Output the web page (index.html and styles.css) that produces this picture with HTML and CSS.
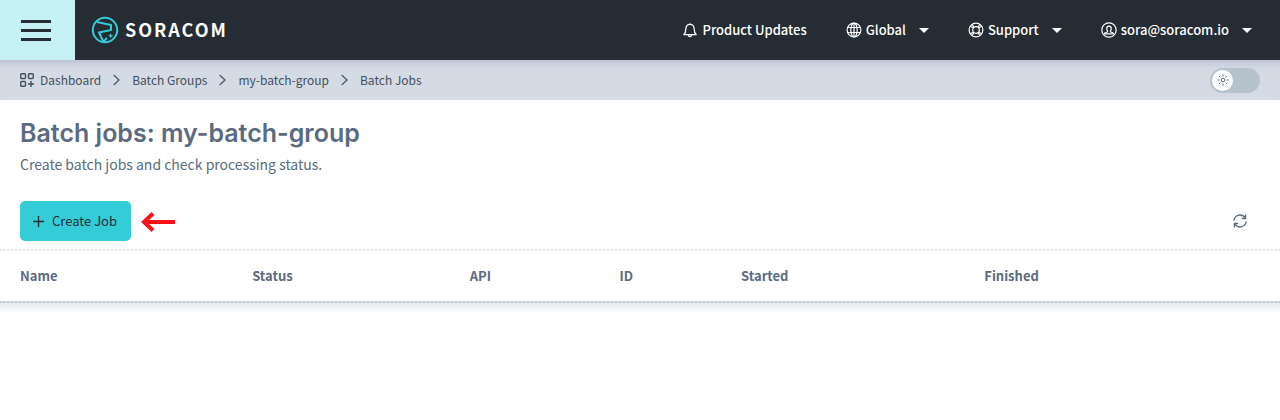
FILE: index.html
```html
<!DOCTYPE html>
<html lang="en">
<head>
    <meta charset="UTF-8">
    <meta name="viewport" content="width=device-width, initial-scale=1.0">
    <title>Batch jobs: my-batch-group</title>
    <link rel="stylesheet" href="styles.css">
</head>
<body>
    <header class="topbar">
        <button type="button" class="menu-button" aria-label="Open menu">
            <span class="menu-line"></span>
            <span class="menu-line"></span>
            <span class="menu-line"></span>
        </button>
        <a href="#" class="logo">
            <svg class="logo-mark" viewBox="0 0 28 28" fill="none" stroke="#34cdd7" stroke-width="2">
                <circle cx="14" cy="14" r="12.2"/>
                <path d="M6 6l14 3v5L8 16.5l4.5 9.5" stroke-linejoin="round"/>
                <path d="M12.5 25.5l3.5-3.5" stroke-width="1.8"/>
                <path d="M19.7 17l.8 2 2 .8-2 .8-.8 2-.8-2-2-.8 2-.8z" fill="#34cdd7" stroke="none"/>
            </svg>
            <span class="logo-text">SORACOM</span>
        </a>
        <nav class="topnav">
            <button type="button" class="nav-item">
                <svg class="icon" viewBox="0 0 16 16" fill="none" stroke="currentColor" stroke-width="1.3">
                    <path d="M8 1.2v1M1.8 12.6h12.4c-1.6-1.5-2-2.6-2-5.6 0-2.9-1.6-4.7-4.2-4.7S3.8 4.1 3.8 7c0 3-.4 4.1-2 5.6z" stroke-linejoin="round"/>
                    <path d="M6.3 13.2c.2 1 .8 1.5 1.7 1.5s1.5-.5 1.7-1.5"/>
                </svg>
                <span>Product Updates</span>
            </button>
            <button type="button" class="nav-item">
                <svg class="icon" viewBox="0 0 16 16" fill="none" stroke="currentColor" stroke-width="1.2">
                    <circle cx="8" cy="8" r="6.9"/>
                    <ellipse cx="8" cy="8" rx="3.2" ry="6.9"/>
                    <path d="M1.5 5.5h13M1.5 10.5h13M8 1v14"/>
                </svg>
                <span>Global</span>
                <span class="caret"></span>
            </button>
            <button type="button" class="nav-item">
                <svg class="icon" viewBox="0 0 16 16" fill="none" stroke="currentColor" stroke-width="1.2">
                    <circle cx="8" cy="8" r="6.9"/>
                    <circle cx="8" cy="8" r="3.3"/>
                    <path d="M2.5 4.2l3 1.9M4.2 2.5l1.9 3M13.5 4.2l-3 1.9M11.8 2.5l-1.9 3M2.5 11.8l3-1.9M4.2 13.5l1.9-3M13.5 11.8l-3-1.9M11.8 13.5l-1.9-3"/>
                </svg>
                <span>Support</span>
                <span class="caret"></span>
            </button>
            <button type="button" class="nav-item">
                <svg class="icon" viewBox="0 0 16 16" fill="none" stroke="currentColor" stroke-width="1.2">
                    <circle cx="8" cy="8" r="7.2"/>
                    <path d="M3.2 11.8c.5-1.2 1.5-1.5 3.3-1.8V9C5.9 8.3 5.8 7.5 5.8 6.4 5.8 4.9 6.7 4.2 8 4.2s2.2.7 2.2 2.2c0 1.1-.1 1.9-.7 2.6v1c1.8.3 2.8.6 3.3 1.8z"/>
                </svg>
                <span>sora@soracom.io</span>
                <span class="caret"></span>
            </button>
        </nav>
    </header>

    <div class="breadcrumb-bar">
        <nav class="breadcrumbs" aria-label="Breadcrumb">
            <a href="#" class="crumb">
                <svg class="crumb-icon" viewBox="0 0 14 14" fill="none" stroke="currentColor" stroke-width="1.4">
                    <rect x=".7" y=".7" width="4.8" height="4.8" rx="1"/>
                    <rect x="8.5" y=".7" width="4.8" height="4.8" rx="1"/>
                    <rect x=".7" y="8.5" width="4.8" height="4.8" rx="1"/>
                    <path d="M11 8v6M8 11h6"/>
                </svg>
                <span>Dashboard</span>
            </a>
            <svg class="chevron" viewBox="0 0 7 12" fill="none" stroke="currentColor" stroke-width="1.3"><path d="M.7 1l5.3 5-5.3 5"/></svg>
            <a href="#" class="crumb">Batch Groups</a>
            <svg class="chevron" viewBox="0 0 7 12" fill="none" stroke="currentColor" stroke-width="1.3"><path d="M.7 1l5.3 5-5.3 5"/></svg>
            <a href="#" class="crumb">my-batch-group</a>
            <svg class="chevron" viewBox="0 0 7 12" fill="none" stroke="currentColor" stroke-width="1.3"><path d="M.7 1l5.3 5-5.3 5"/></svg>
            <a href="#" class="crumb">Batch Jobs</a>
        </nav>
        <label class="theme-switch">
            <input type="checkbox" class="theme-input" aria-label="Dark theme">
            <span class="theme-knob">
                <svg class="sun" viewBox="0 0 12 12" fill="none" stroke="currentColor">
                    <circle cx="6" cy="6" r="1.8"/>
                    <path d="M6 .3v2.2M6 9.5v2.2M.3 6h2.2M9.5 6h2.2M2 2l1.5 1.5M8.5 8.5L10 10M2 10l1.5-1.5M8.5 3.5L10 2"/>
                </svg>
            </span>
        </label>
    </div>

    <main>
        <div class="page-head">
            <h1>Batch jobs: my-batch-group</h1>
            <p>Create batch jobs and check processing status.</p>
        </div>

        <div class="toolbar">
            <button type="button" class="create-button">
                <svg class="plus" viewBox="0 0 11 11" fill="none" stroke="currentColor" stroke-width="1.4"><path d="M5.5 0v11M0 5.5h11"/></svg>
                <span>Create Job</span>
            </button>
            <svg class="arrow" viewBox="0 0 34 20" fill="none" stroke="#fb1018" stroke-width="4"><path d="M34 11H3M12 2.5L3 11l9 8.5"/></svg>
            <button type="button" class="refresh-button" aria-label="Refresh">
                <svg class="refresh" viewBox="0 0 14 14" fill="none" stroke="currentColor" stroke-width="1.3">
                    <path d="M.8 6.7C1 3.4 3.7 1 7 1c2.2 0 4 1 5.2 2.8M13.2 7.3C13 10.6 10.3 13 7 13c-2.2 0-4-1-5.2-2.8"/>
                    <path d="M12.6.5v4H8.7M1.4 13.5v-4h3.9"/>
                </svg>
            </button>
        </div>

        <div class="table-wrap">
            <table class="jobs">
                <thead>
                    <tr>
                        <th class="col-name">Name</th>
                        <th class="col-status">Status</th>
                        <th class="col-api">API</th>
                        <th class="col-id">ID</th>
                        <th class="col-started">Started</th>
                        <th>Finished</th>
                    </tr>
                </thead>
            </table>
        </div>
    </main>
</body>
</html>
```
FILE: styles.css
```css
body {
    font-family: "Noto Sans CJK JP", "Noto Sans", sans-serif;
    font-size: 13px;
    line-height: 20px;
    color: #5a6b80;
    background-color: #fff;
    margin: 0;
    min-height: 100vh;
}

button {
    font: inherit;
    color: inherit;
    background: none;
    border: none;
    padding: 0;
    cursor: pointer;
}

svg {
    display: block;
    flex: none;
}

/* Top bar */
.topbar {
    display: flex;
    align-items: center;
    height: 60px;
    background-color: #252c33;
    color: #fff;
}

.menu-button {
    display: flex;
    flex-direction: column;
    justify-content: center;
    gap: 6px;
    width: 75px;
    height: 60px;
    padding-left: 21px;
    background-color: #c5f1f4;
}

.menu-line {
    width: 30px;
    height: 3px;
    background-color: #252c33;
}

.logo {
    display: flex;
    align-items: center;
    gap: 6px;
    margin-left: 16px;
    color: #fff;
    text-decoration: none;
}

.logo-mark {
    width: 28px;
    height: 28px;
}

.logo-text {
    font-size: 18px;
    font-weight: 700;
    letter-spacing: 2px;
    padding-bottom: 2px;
}

.topnav {
    display: flex;
    gap: 39px;
    margin-left: auto;
    padding-right: 28px;
}

.nav-item {
    display: flex;
    align-items: center;
    gap: 4px;
    font-weight: 500;
}

.icon {
    width: 16px;
    height: 16px;
}

.caret {
    border: 5px solid transparent;
    border-top-color: #fff;
    border-bottom: none;
    margin-left: 9px;
}

/* Breadcrumbs */
.breadcrumb-bar {
    display: flex;
    justify-content: space-between;
    align-items: center;
    height: 40px;
    padding: 0 20px;
    background-color: #d4dbe5;
    box-shadow: inset 0 10px 10px -8px #b4bacb;
}

.breadcrumbs {
    display: flex;
    align-items: center;
    gap: 12px;
    font-size: 12px;
    color: #4a5a6b;
}

.crumb {
    display: flex;
    align-items: center;
    gap: 6px;
    color: #444f5c;
    text-decoration: none;
}

.crumb-icon {
    width: 14px;
    height: 14px;
}

.chevron {
    width: 7px;
    height: 12px;
}

.theme-switch {
    display: flex;
    align-items: center;
    width: 50px;
    height: 25px;
    border-radius: 13px;
    background-color: #b6c2ce;
    box-sizing: border-box;
    padding: 0 2px;
    cursor: pointer;
}

.theme-input {
    appearance: none;
    width: 0;
    height: 0;
    margin: 0;
}

.theme-knob {
    display: flex;
    justify-content: center;
    align-items: center;
    width: 21px;
    height: 21px;
    border-radius: 50%;
    background-color: #fff;
}

.theme-input:checked + .theme-knob {
    margin-left: auto;
}

.sun {
    width: 12px;
    height: 12px;
}

/* Page content */
.page-head {
    padding: 18px 20px 0;
}

h1 {
    font-family: Inter, sans-serif;
    font-size: 25px;
    line-height: 30px;
    font-weight: 600;
    margin: 0;
}

.page-head p {
    font-size: 14px;
    margin: 6px 0 0;
}

.toolbar {
    display: flex;
    align-items: center;
    padding: 27px 33px 8px 20px;
    border-bottom: 2px dotted #e6e8ea;
}

.create-button {
    display: flex;
    align-items: center;
    gap: 8px;
    height: 40px;
    padding: 0 14px 0 13px;
    border-radius: 5px;
    background-color: #34cdd7;
    color: #252c33;
}

.plus {
    width: 11px;
    height: 11px;
}

.arrow {
    width: 34px;
    height: 20px;
    margin-left: 10px;
    overflow: visible;
}

.refresh-button {
    margin-left: auto;
}

.refresh {
    width: 14px;
    height: 14px;
}

/* Jobs table */
.table-wrap::after {
    content: "";
    display: block;
    height: 10px;
    background: linear-gradient(#e6e9ed, #fff);
}

.jobs {
    width: 100%;
    table-layout: fixed;
    border-collapse: separate;
    border-spacing: 0;
    border-bottom: 2px dotted #c6ccd2;
    background: linear-gradient(#fff, #fff) padding-box, #d8dce2 border-box;
}

.jobs th {
    padding: 15px 0;
    font-weight: 700;
    text-align: left;
}

.jobs .col-name {
    width: 19.7%;
    padding-left: 20px;
    box-sizing: border-box;
}

.col-status {
    width: 17%;
}

.col-api {
    width: 11.7%;
}

.col-id {
    width: 9.5%;
}

.col-started {
    width: 19%;
}
```
